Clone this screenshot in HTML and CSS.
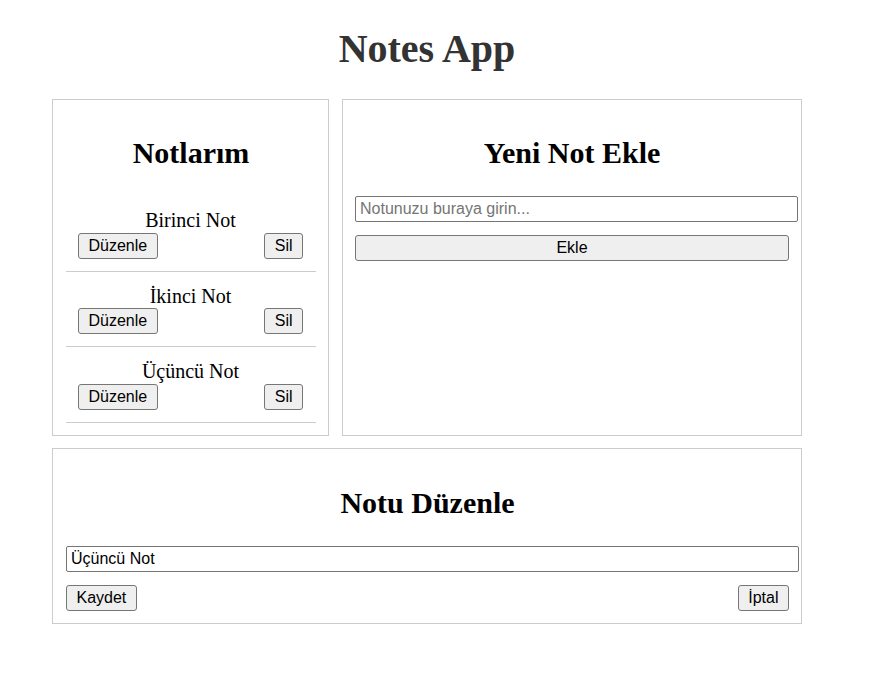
FILE: index.html
```html
<!DOCTYPE html>
<html lang="tr">
<head>
<meta charset="utf-8">
<title>Notes App</title>
<link rel="stylesheet" href="styles.css">
</head>
<body>
<div class="app">
  <h1 class="title">Notes App</h1>
  <div class="top-row">
    <section class="panel notes-panel">
      <h2>Notlarım</h2>
      <ul class="note-list">
        <li class="note">
          <div class="note-text">Birinci Not</div>
          <div class="note-actions"><button class="btn">Düzenle</button><button class="btn">Sil</button></div>
        </li>
        <li class="note">
          <div class="note-text">İkinci Not</div>
          <div class="note-actions"><button class="btn">Düzenle</button><button class="btn">Sil</button></div>
        </li>
        <li class="note">
          <div class="note-text">Üçüncü Not</div>
          <div class="note-actions"><button class="btn">Düzenle</button><button class="btn">Sil</button></div>
        </li>
      </ul>
    </section>
    <section class="panel add-panel">
      <h2>Yeni Not Ekle</h2>
      <input class="field" type="text" placeholder="Notunuzu buraya girin...">
      <button class="btn btn-full">Ekle</button>
    </section>
  </div>
  <section class="panel edit-panel">
    <h2>Notu Düzenle</h2>
    <input class="field" type="text" value="Üçüncü Not">
    <div class="edit-actions"><button class="btn">Kaydet</button><button class="btn">İptal</button></div>
  </section>
</div>
</body>
</html>
```
FILE: styles.css
```css
html, body {
  background: #fff;
}
body {
  margin: 8px;
  font-family: "Liberation Serif", "Times New Roman", serif;
  font-size: 20px;
  color: #000;
}
.app {
  width: 750px;
  margin-left: 44px;
}
.title {
  font-size: 40px;
  font-weight: bold;
  color: #333;
  text-align: center;
  margin: 16.8px 0 26.8px;
}
.top-row {
  display: flex;
  gap: 13px;
  align-items: stretch;
}
.panel {
  border: 1px solid #ccc;
  padding: 12px;
  box-sizing: border-box;
}
.panel h2 {
  font-size: 30px;
  font-weight: bold;
  text-align: center;
  margin: 24.9px 0 26px;
}
.notes-panel {
  flex: 0 0 277px;
  padding-left: 13px;
}
.add-panel {
  flex: 1 1 auto;
}
.note-list {
  list-style: none;
  margin: 0;
  padding: 0;
}
.note {
  padding: 12px 13px 12px 12px;
  border-bottom: 1px solid #ccc;
}
.note-text {
  text-align: center;
  line-height: 24.5px;
}
.note-actions,
.edit-actions {
  display: flex;
  justify-content: space-between;
}
.btn {
  font-family: "Liberation Sans", Arial, sans-serif;
  font-size: 16px;
  line-height: 18px;
  height: 26px;
  color: #000;
  background: #efefef;
  border: 1px solid #767676;
  border-radius: 3px;
  padding: 3px 9.5px;
  margin: 0;
}
.btn-full {
  display: block;
  width: 100%;
}
.field {
  display: block;
  height: 26px;
  font-family: "Liberation Sans", Arial, sans-serif;
  font-size: 16px;
  line-height: 18px;
  color: #000;
  border: 1px solid #767676;
  border-radius: 2px;
  padding: 3px 4px;
  margin: 0 0 13px 0;
  background: #fff;
  box-sizing: border-box;
  width: calc(100% + 9px);
}
.field::placeholder {
  color: #757575;
}
.edit-panel {
  margin-top: 12px;
  padding-left: 13px;
}
.edit-panel .field {
  width: calc(100% + 10px);
}
```
